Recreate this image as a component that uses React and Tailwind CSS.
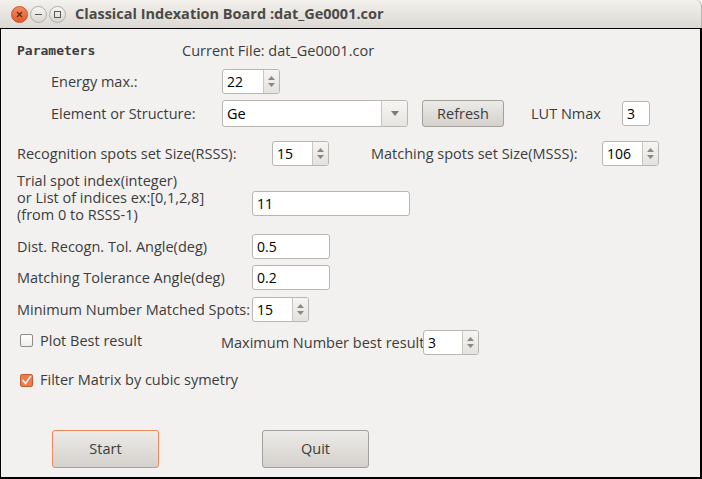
import React from 'react';

// Qt/Ubuntu-style "Classical Indexation Board" dialog.
const UI_FONT = { fontFamily: '"Open Sans", "Noto Sans", sans-serif' };

const Arrows = () => (
  <div className="flex h-full w-[16px] flex-col items-center justify-center gap-[3px] border-l border-[#c9c6c1] bg-gradient-to-b from-[#f6f5f3] to-[#e4e2de]">
    <svg width="7" height="4" viewBox="0 0 7 4"><path d="M0 4 L3.5 0 L7 4 Z" fill="#8a8884" /></svg>
    <svg width="7" height="4" viewBox="0 0 7 4"><path d="M0 0 L3.5 4 L7 0 Z" fill="#8a8884" /></svg>
  </div>
);

const SpinBox = ({ value, w = 'w-[57px]' }) => (
  <div className={`flex h-[25px] ${w} shrink-0 items-stretch overflow-hidden rounded-[3px] border border-[#b9b6b1] bg-white`}>
    <div className="flex flex-1 items-center pl-[4px] text-[14px] text-black">{value}</div>
    <Arrows />
  </div>
);

const TextBox = ({ value, w }) => (
  <div className={`flex h-[25px] ${w} shrink-0 items-center rounded-[3px] border border-[#b9b6b1] bg-white pl-[4px] text-[14px] text-black`}>
    {value}
  </div>
);

const Button = ({ children, w, h, accent }) => (
  <div
    className={`flex ${w} ${h} items-center justify-center rounded-[3px] border bg-gradient-to-b from-[#edebe8] to-[#d4d1cc] text-[14.5px] text-[#3c3c3c] ${
      accent ? 'border-[#ec8a5e]' : 'border-[#a3a09b]'
    }`}
  >
    {children}
  </div>
);

const CheckBox = ({ checked }) =>
  checked ? (
    <div className="flex h-[13px] w-[13px] shrink-0 items-center justify-center rounded-[2px] border border-[#c45d33] bg-[#ea7c4e]">
      <svg width="11" height="11" viewBox="0 0 11 11">
        <path d="M2 5.5 L4.5 8.5 L9.5 1.5" fill="none" stroke="#fbe9df" strokeWidth="1.8" strokeLinecap="round" />
      </svg>
    </div>
  ) : (
    <div className="h-[13px] w-[13px] shrink-0 rounded-[2px] border border-[#8f8c87] bg-gradient-to-b from-white to-[#eeedeb]" />
  );

export default function App() {
  return (
    <div className="flex h-[479px] w-[702px] flex-col bg-[#f2f1f0] text-[14.5px] text-[#3c3c3c]" style={UI_FONT}>
      {/* title bar */}
      <div className="flex h-[28px] shrink-0 items-center rounded-t-[6px] border-r border-[#b8b5b0] bg-gradient-to-b from-[#f3f1ed] to-[#dcd9d4] pl-[11px]">
        <div className="flex h-[17px] w-[17px] items-center justify-center rounded-full border border-[#c5532a] bg-gradient-to-b from-[#f48a5e] to-[#e1592c]">
          <svg width="7" height="7" viewBox="0 0 7 7"><path d="M1 1 L6 6 M6 1 L1 6" stroke="#5a2a18" strokeWidth="1.3" /></svg>
        </div>
        <div className="ml-[2px] flex h-[17px] w-[17px] items-center justify-center rounded-full border border-[#b0ada8] bg-gradient-to-b from-[#f8f7f5] to-[#d9d6d1]">
          <div className="h-[1px] w-[7px] bg-[#5c5a56]" />
        </div>
        <div className="ml-[2px] flex h-[17px] w-[17px] items-center justify-center rounded-full border border-[#b0ada8] bg-gradient-to-b from-[#f8f7f5] to-[#d9d6d1]">
          <div className="h-[7px] w-[7px] border border-[#5c5a56]" />
        </div>
        <span className="ml-[9px] text-[14.5px] font-bold text-[#4c4a46]">Classical Indexation Board :dat_Ge0001.cor</span>
      </div>

      {/* client area */}
      <div className="flex flex-1 flex-col border border-black border-r-[2px] border-b-[2px] bg-[#f2f1f0] pl-[16px]">
        <div className="mt-[12px] flex h-[20px] items-center">
          <span className="w-[165px] text-[13px] font-bold text-[#3c3c3c]" style={{ fontFamily: '"DejaVu Sans Mono", monospace' }}>
            Parameters
          </span>
          <span>Current File: dat_Ge0001.cor</span>
        </div>

        <div className="mt-[8px] flex items-center">
          <span className="ml-[34px] w-[171px]">Energy max.:</span>
          <SpinBox value="22" w="w-[58px]" />
        </div>

        <div className="mt-[6px] flex items-center">
          <span className="ml-[34px] w-[171px]">Element or Structure:</span>
          <div className="flex h-[27px] w-[186px] items-stretch overflow-hidden rounded-[3px] border border-[#b9b6b1] bg-white">
            <div className="flex flex-1 items-center pl-[4px] text-black">Ge</div>
            <div className="flex w-[26px] items-center justify-center border-l border-[#c9c6c1] bg-gradient-to-b from-[#f7f6f4] to-[#e6e4e0]">
              <svg width="8" height="5" viewBox="0 0 8 5"><path d="M0 0 L4 5 L8 0 Z" fill="#7d7b77" /></svg>
            </div>
          </div>
          <div className="ml-[14px]">
            <Button w="w-[82px]" h="h-[27px]">Refresh</Button>
          </div>
          <span className="ml-[27px] w-[91px]">LUT Nmax</span>
          <TextBox value="3" w="w-[28px]" />
        </div>

        <div className="mt-[14px] flex items-center">
          <span className="w-[255px] whitespace-nowrap">Recognition spots set Size(RSSS):</span>
          <SpinBox value="15" />
          <span className="ml-[42px] w-[231px] whitespace-nowrap">Matching spots set Size(MSSS):</span>
          <SpinBox value="106" />
        </div>

        <div className="mt-[6px] flex items-start">
          <p className="w-[235px] leading-[17px]">
            Trial spot index(integer)
            <br />
            or List of indices ex:[0,1,2,8]
            <br />
            (from 0 to RSSS-1)
          </p>
          <div className="mt-[19px]">
            <TextBox value="11" w="w-[158px]" />
          </div>
        </div>

        <div className="mt-[11px] flex items-center">
          <span className="w-[235px]">Dist. Recogn. Tol. Angle(deg)</span>
          <TextBox value="0.5" w="w-[78px]" />
        </div>

        <div className="mt-[6px] flex items-center">
          <span className="w-[235px]">Matching Tolerance Angle(deg)</span>
          <TextBox value="0.2" w="w-[78px]" />
        </div>

        <div className="mt-[7px] flex items-center">
          <span className="w-[235px] whitespace-nowrap">Minimum Number Matched Spots:</span>
          <SpinBox value="15" />
        </div>

        <div className="mt-[8px] flex items-center">
          <div className="ml-[3px] -mt-[4px] flex w-[201px] items-center">
            <CheckBox />
            <span className="ml-[7px]">Plot Best result</span>
          </div>
          <span className="w-[202px] whitespace-nowrap">Maximum Number best result</span>
          <SpinBox value="3" w="w-[56px]" />
        </div>

        <div className="mt-[15px] flex h-[20px] items-center">
          <div className="ml-[3px] flex items-center">
            <CheckBox checked />
            <span className="ml-[7px]">Filter Matrix by cubic symetry</span>
          </div>
        </div>

        <div className="mt-[40px] flex items-center">
          <div className="ml-[35px]">
            <Button w="w-[107px]" h="h-[38px]" accent>Start</Button>
          </div>
          <div className="ml-[103px]">
            <Button w="w-[107px]" h="h-[38px]">Quit</Button>
          </div>
        </div>
      </div>
    </div>
  );
}
